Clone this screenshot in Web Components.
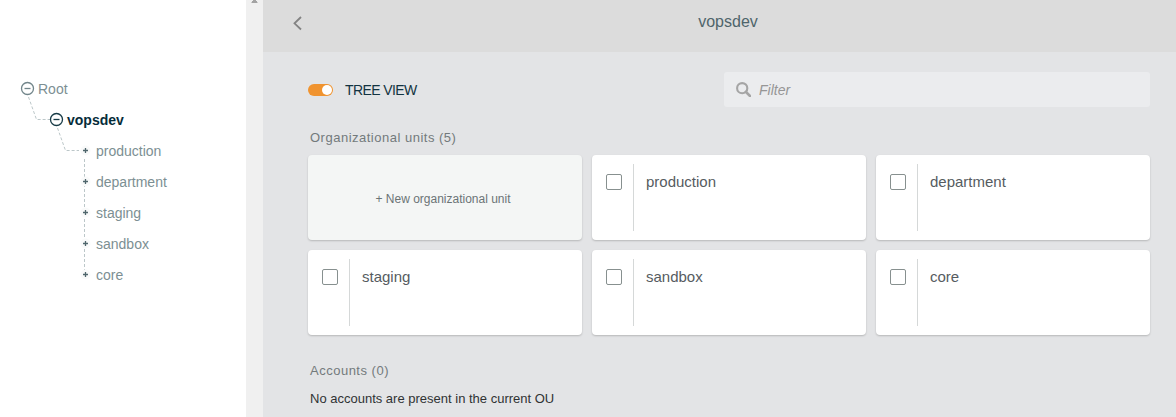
<!DOCTYPE html>
<html lang="en">
<head>
<meta charset="utf-8">
<title>Organizational units</title>
<style>
html, body { margin: 0; height: 100%; overflow: hidden; font-family: "Liberation Sans", Arial, sans-serif; }
</style>
</head>
<body>
<ou-app></ou-app>
<script>
const define = (name, html) => customElements.define(name, class extends HTMLElement {
  constructor() {
    super();
    const t = document.createElement('template');
    t.innerHTML = html;
    this.attachShadow({ mode: 'open' }).append(t.content.cloneNode(true));
  }
});

define('tree-node', `
<style>
:host { display: flex; align-items: center; height: 31px; padding-left: 20px; font-size: 14px; color: #7c8f93; }
:host([level="1"]) { padding-left: 49px; color: #062c3a; font-weight: bold; }
:host([level="2"]) { padding-left: 79px; }
svg { flex: none; width: 15px; height: 15px; margin-right: 3px; fill: none; stroke: #71858a; stroke-width: 1.3; position: relative; z-index: 1; }
:host([level="1"]) svg { stroke: #173b46; }
.plus { display: none; width: 13px; height: 13px; margin-right: 4px; }
:host([level="2"]) .minus { display: none; }
:host([level="2"]) .plus { display: block; }
</style>
<svg class="minus" viewBox="0 0 15 15"><circle cx="7.5" cy="7.5" r="6" fill="#fff"/><path d="M4.5 7.5h6"/></svg>
<svg class="plus" viewBox="0 0 13 13"><circle cx="6.5" cy="6.5" r="5" fill="#f9fafa" stroke="none"/><path d="M4 6.5h5M6.5 4v5" stroke="#4f666c" stroke-width="1.3"/></svg>
<slot></slot>`);

define('ou-tree', `
<style>
:host { display: block; position: relative; width: 246px; flex: none; box-sizing: border-box; padding-top: 73px; background: #fff; }
svg { position: absolute; left: 0; top: 0; width: 246px; height: 300px; fill: none; stroke: #bcc7c9; stroke-width: 1; stroke-dasharray: 3 2; }
</style>
<svg><path d="M28.5 97L36.5 119.5H50M57.5 128L65.5 150.5H79M84.5 159V270"/></svg>
<slot></slot>`);

define('scroll-track', `
<style>
:host { display: block; flex: none; width: 17px; background: #f0f0f0; }
svg { display: block; margin-left: 5px; }
</style>
<svg width="8" height="4"><path d="M1 2h5L7 3H0zM2 0h3v1h1v1H1V1h1z" fill="#a3a3a3"/></svg>`);

define('page-header', `
<style>
:host { display: flex; align-items: center; height: 52px; box-sizing: border-box; padding: 0 29px 7px; background: #dcdcdc; color: #4f656b; font-size: 16px; }
svg { width: 11px; height: 16px; margin-top: 1px; }
.title { flex: 1; text-align: center; margin: -1px -6px 0 0; }
</style>
<svg viewBox="0 0 11 16"><path d="M9 2L2.5 8.3L9 14.5" fill="none" stroke="#838383" stroke-width="1.8"/></svg>
<span class="title"><slot></slot></span>`);

define('toggle-switch', `
<style>
:host { display: flex; align-items: center; gap: 12px; color: #123341; font-size: 14px; letter-spacing: -.6px; }
i { display: flex; justify-content: flex-end; box-sizing: border-box; width: 25px; height: 12px; padding: 1px; border-radius: 6px; background: #f0932f; }
i::after { content: ""; width: 10px; height: 10px; border-radius: 50%; background: #fff; }
</style>
<i></i><span><slot></slot></span>`);

define('filter-box', `
<style>
:host { display: flex; align-items: center; box-sizing: border-box; width: 426px; height: 35px; padding-left: 12px; gap: 8px; border-radius: 3px; background: #ebecee; color: #969696; font-size: 14px; font-style: italic; }
</style>
<svg width="15" height="15" fill="none" stroke="#a5a5a5"><circle cx="6.2" cy="6.2" r="5.1" stroke-width="2.1"/><path d="M10 10l4 4" stroke-width="2.5" stroke-linecap="round"/></svg>
<slot></slot>`);

define('section-title', `
<style>
:host { display: block; padding-left: 2px; height: 15px; line-height: 15px; font-size: 13px; letter-spacing: .5px; color: #737a7c; }
</style><slot></slot>`);

define('unit-card', `
<style>
:host { display: flex; box-sizing: border-box; height: 85px; padding: 9px 14px; border-radius: 4px; background: #fff; box-shadow: 0 1px 2px rgba(0,0,0,.2); color: #565c5f; font-size: 15px; }
i { box-sizing: border-box; width: 16px; height: 16px; margin-top: 10px; border: 1px solid #87908f; border-radius: 2px; }
b { width: 1px; height: 67px; margin: 0 12px 0 11px; background: #d5d8d8; }
span { line-height: 18px; margin-top: 9px; }
</style>
<i></i><b></b><span><slot></slot></span>`);

define('new-unit', `
<style>
:host { display: flex; align-items: center; justify-content: center; box-sizing: border-box; height: 85px; padding: 3px 4px 0 0; border-radius: 4px; background: #f4f6f5; box-shadow: 0 1px 2px rgba(0,0,0,.2); color: #6b7476; font-size: 12px; }
</style><slot></slot>`);

define('ou-app', `
<style>
:host { display: flex; height: 100vh; }
main { flex: 1; background: #e3e4e6; }
.content { padding: 20px 26px 0 45px; }
.bar { display: flex; align-items: center; justify-content: space-between; margin-bottom: 23px; }
.grid { display: grid; grid-template-columns: repeat(3, 1fr); gap: 10px; margin: 10px 0 28px; }
p { margin: 13px 0 0 2px; line-height: 15px; font-size: 13px; color: #303334; }
</style>
<ou-tree>
<tree-node level="0">Root</tree-node><tree-node level="1">vopsdev</tree-node>
<tree-node level="2">production</tree-node><tree-node level="2">department</tree-node><tree-node level="2">staging</tree-node><tree-node level="2">sandbox</tree-node><tree-node level="2">core</tree-node>
</ou-tree>
<scroll-track></scroll-track>
<main>
<page-header>vopsdev</page-header>
<div class="content">
<div class="bar"><toggle-switch>TREE VIEW</toggle-switch><filter-box>Filter</filter-box></div>
<section-title>Organizational units (5)</section-title>
<div class="grid"><new-unit>+ New organizational unit</new-unit><unit-card>production</unit-card><unit-card>department</unit-card><unit-card>staging</unit-card><unit-card>sandbox</unit-card><unit-card>core</unit-card></div>
<section-title>Accounts (0)</section-title>
<p>No accounts are present in the current OU</p>
</div>
</main>`);
</script>
</body>
</html>
